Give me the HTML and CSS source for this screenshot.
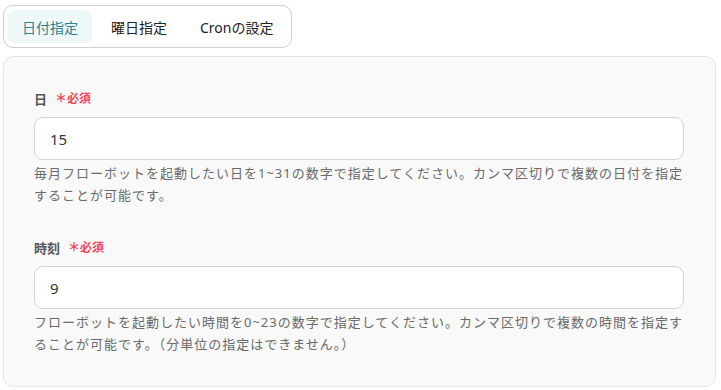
FILE: index.html
```html
<!DOCTYPE html>
<html lang="ja">
<head>
<meta charset="utf-8">
<link rel="stylesheet" href="styles.css">
</head>
<body>
<div class="tabs">
  <button class="tab active">日付指定</button>
  <button class="tab">曜日指定</button>
  <button class="tab">Cronの設定</button>
</div>
<div class="panel">
  <div class="field">
    <label class="label">日<span class="req">＊必須</span></label>
    <div class="input">15</div>
    <p class="help">毎月フローボットを起動したい日を1~31の数字で指定してください。カンマ区切りで複数の日付を指定することが可能です。</p>
  </div>
  <div class="field second">
    <label class="label">時刻<span class="req">＊必須</span></label>
    <div class="input">9</div>
    <p class="help">フローボットを起動したい時間を0~23の数字で指定してください。カンマ区切りで複数の時間を指定することが可能です。（分単位の指定はできません。）</p>
  </div>
</div>
</body>
</html>
```
FILE: styles.css
```css
* { box-sizing: border-box; }
html, body { margin: 0; background: #fff; }
body {
  padding: 5px 5px 0 3px;
  font-family: "Noto Sans", "Noto Sans CJK JP", sans-serif;
  color: #333;
}
.tabs {
  display: inline-flex;
  gap: 5px;
  padding: 4px;
  border: 1px solid #cfcfcf;
  border-radius: 10px;
  background: #fff;
}
.tab {
  height: 33px;
  padding: 0 14px;
  border: 0;
  border-radius: 7px;
  background: transparent;
  font-family: inherit;
  font-size: 14px;
  color: #222;
}
.tab.active {
  background: #eef8f9;
  color: #2c7f8e;
}
.panel {
  margin-top: 8px;
  padding: 31px 31px 31px 30px;
  background: #f9f9f9;
  border: 1px solid #e5e5e5;
  border-radius: 10px;
}
.field.second { margin-top: 31px; }
.label {
  display: flex;
  align-items: center;
  height: 20px;
  font-size: 13px;
  font-weight: 700;
  color: #555;
  margin-bottom: 9px;
}
.req {
  margin-left: 8px;
  font-size: 12px;
  color: #f2445c;
}
.input {
  height: 43px;
  display: flex;
  align-items: center;
  padding: 0 15px;
  background: #fff;
  border: 1px solid #cfd4dc;
  border-radius: 9px;
  font-size: 15px;
  color: #333;
}
.help {
  margin: 2px 0 0;
  font-size: 13px;
  line-height: 22px;
  letter-spacing: 1px;
  color: #6a6a6a;
}
```
